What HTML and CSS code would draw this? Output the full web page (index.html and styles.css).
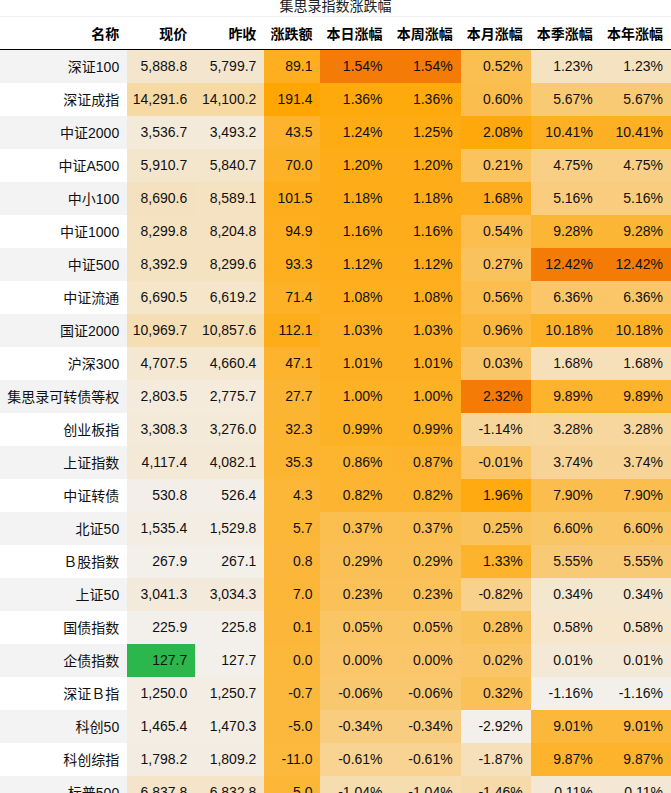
FILE: index.html
```html
<!DOCTYPE html>
<html lang="zh-CN">
<head>
<meta charset="utf-8">
<title>集思录指数涨跌幅</title>
<link rel="stylesheet" href="styles.css">
</head>
<body>
<table class="grid">
  <caption class="grid-title">集思录指数涨跌幅</caption>
  <colgroup>
    <col class="c-name"><col class="c-px"><col class="c-px2"><col class="c-chg"><col class="c-pct"><col class="c-pct"><col class="c-pct"><col class="c-pct"><col class="c-last">
  </colgroup>
  <thead>
    <tr><th>名称</th><th>现价</th><th>昨收</th><th>涨跌额</th><th>本日涨幅</th><th>本周涨幅</th><th>本月涨幅</th><th>本季涨幅</th><th>本年涨幅</th></tr>
  </thead>
  <tbody>
    <tr><th>深证100</th><td>5,888.8</td><td>5,799.7</td><td>89.1</td><td>1.54%</td><td>1.54%</td><td>0.52%</td><td>1.23%</td><td>1.23%</td></tr>
    <tr><th>深证成指</th><td>14,291.6</td><td>14,100.2</td><td>191.4</td><td>1.36%</td><td>1.36%</td><td>0.60%</td><td>5.67%</td><td>5.67%</td></tr>
    <tr><th>中证2000</th><td>3,536.7</td><td>3,493.2</td><td>43.5</td><td>1.24%</td><td>1.25%</td><td>2.08%</td><td>10.41%</td><td>10.41%</td></tr>
    <tr><th>中证A500</th><td>5,910.7</td><td>5,840.7</td><td>70.0</td><td>1.20%</td><td>1.20%</td><td>0.21%</td><td>4.75%</td><td>4.75%</td></tr>
    <tr><th>中小100</th><td>8,690.6</td><td>8,589.1</td><td>101.5</td><td>1.18%</td><td>1.18%</td><td>1.68%</td><td>5.16%</td><td>5.16%</td></tr>
    <tr><th>中证1000</th><td>8,299.8</td><td>8,204.8</td><td>94.9</td><td>1.16%</td><td>1.16%</td><td>0.54%</td><td>9.28%</td><td>9.28%</td></tr>
    <tr><th>中证500</th><td>8,392.9</td><td>8,299.6</td><td>93.3</td><td>1.12%</td><td>1.12%</td><td>0.27%</td><td>12.42%</td><td>12.42%</td></tr>
    <tr><th>中证流通</th><td>6,690.5</td><td>6,619.2</td><td>71.4</td><td>1.08%</td><td>1.08%</td><td>0.56%</td><td>6.36%</td><td>6.36%</td></tr>
    <tr><th>国证2000</th><td>10,969.7</td><td>10,857.6</td><td>112.1</td><td>1.03%</td><td>1.03%</td><td>0.96%</td><td>10.18%</td><td>10.18%</td></tr>
    <tr><th>沪深300</th><td>4,707.5</td><td>4,660.4</td><td>47.1</td><td>1.01%</td><td>1.01%</td><td>0.03%</td><td>1.68%</td><td>1.68%</td></tr>
    <tr><th>集思录可转债等权</th><td>2,803.5</td><td>2,775.7</td><td>27.7</td><td>1.00%</td><td>1.00%</td><td>2.32%</td><td>9.89%</td><td>9.89%</td></tr>
    <tr><th>创业板指</th><td>3,308.3</td><td>3,276.0</td><td>32.3</td><td>0.99%</td><td>0.99%</td><td>-1.14%</td><td>3.28%</td><td>3.28%</td></tr>
    <tr><th>上证指数</th><td>4,117.4</td><td>4,082.1</td><td>35.3</td><td>0.86%</td><td>0.87%</td><td>-0.01%</td><td>3.74%</td><td>3.74%</td></tr>
    <tr><th>中证转债</th><td>530.8</td><td>526.4</td><td>4.3</td><td>0.82%</td><td>0.82%</td><td>1.96%</td><td>7.90%</td><td>7.90%</td></tr>
    <tr><th>北证50</th><td>1,535.4</td><td>1,529.8</td><td>5.7</td><td>0.37%</td><td>0.37%</td><td>0.25%</td><td>6.60%</td><td>6.60%</td></tr>
    <tr><th>Ｂ股指数</th><td>267.9</td><td>267.1</td><td>0.8</td><td>0.29%</td><td>0.29%</td><td>1.33%</td><td>5.55%</td><td>5.55%</td></tr>
    <tr><th>上证50</th><td>3,041.3</td><td>3,034.3</td><td>7.0</td><td>0.23%</td><td>0.23%</td><td>-0.82%</td><td>0.34%</td><td>0.34%</td></tr>
    <tr><th>国债指数</th><td>225.9</td><td>225.8</td><td>0.1</td><td>0.05%</td><td>0.05%</td><td>0.28%</td><td>0.58%</td><td>0.58%</td></tr>
    <tr><th>企债指数</th><td>127.7</td><td>127.7</td><td>0.0</td><td>0.00%</td><td>0.00%</td><td>0.02%</td><td>0.01%</td><td>0.01%</td></tr>
    <tr><th>深证Ｂ指</th><td>1,250.0</td><td>1,250.7</td><td>-0.7</td><td>-0.06%</td><td>-0.06%</td><td>0.32%</td><td>-1.16%</td><td>-1.16%</td></tr>
    <tr><th>科创50</th><td>1,465.4</td><td>1,470.3</td><td>-5.0</td><td>-0.34%</td><td>-0.34%</td><td>-2.92%</td><td>9.01%</td><td>9.01%</td></tr>
    <tr><th>科创综指</th><td>1,798.2</td><td>1,809.2</td><td>-11.0</td><td>-0.61%</td><td>-0.61%</td><td>-1.87%</td><td>9.87%</td><td>9.87%</td></tr>
    <tr><th>标普500</th><td>6,837.8</td><td>6,832.8</td><td>5.0</td><td>-1.04%</td><td>-1.04%</td><td>-1.46%</td><td>0.11%</td><td>0.11%</td></tr>
  </tbody>
</table>
<script src="script.js"></script>
</body>
</html>
```

FILE: styles.css
```css
html, body {
  margin: 0;
  padding: 0;
  background: #ffffff;
  overflow: hidden;
}

body {
  font-family: "Liberation Sans", "Noto Sans CJK SC", sans-serif;
  font-size: 14px;
  color: #111111;
}

.grid {
  border-collapse: collapse;
  table-layout: fixed;
  width: 671px;
  margin-top: -4px;
}

.grid-title {
  font-size: 14px;
  line-height: 20px;
  color: #222222;
  text-align: center;
}

.c-name { width: 127px; }
.c-px { width: 68px; }
.c-px2 { width: 69px; }
.c-chg { width: 56px; }
.c-pct { width: 70px; }
.c-last { width: 70px; }

.grid th,
.grid td {
  padding: 0 8px 0 0;
  text-align: right;
  white-space: nowrap;
  vertical-align: middle;
}

.grid thead th {
  height: 32px;
  font-weight: bold;
  color: #000000;
  background: #ffffff;
  border-top: 1px solid #f0f0f0;
  border-bottom: 1px solid #000000;
}

.grid tbody th {
  font-weight: normal;
}

.grid tbody tr {
  height: 33px;
}

.grid tbody tr:nth-child(odd) {
  background: #f3f3f3;
}

.grid tbody tr:nth-child(even) {
  background: #ffffff;
}

.grid td.hl-max {
  background: #f37b06 !important;
}

.grid td.hl-min {
  background: #2bb74b !important;
}
```

FILE: script.js
```js
(function () {
  var cfg = [
    { min: 127.7, max: 47000, lowMark: true },
    { min: 127.7, max: 47000 },
    { min: -600, max: 200 },
    { min: -1.9, max: 1.54, highMark: true },
    { min: -1.9, max: 1.54, highMark: true },
    { min: -2.92, max: 2.32, highMark: true },
    { min: -1.16, max: 12.42, highMark: true },
    { min: -1.16, max: 12.42, highMark: true }
  ];
  var lo = [243, 239, 234];
  var hi = [255, 165, 0];
  var rows = document.querySelectorAll('.grid tbody tr');
  function num(cell) {
    return parseFloat(cell.textContent.replace(/,/g, '').replace('%', ''));
  }
  for (var c = 0; c < cfg.length; c++) {
    var cells = [];
    var vals = [];
    for (var r = 0; r < rows.length; r++) {
      var cell = rows[r].querySelectorAll('td')[c];
      cells.push(cell);
      vals.push(num(cell));
    }
    var vmax = Math.max.apply(null, vals);
    var vmin = Math.min.apply(null, vals);
    var k = cfg[c];
    for (var i = 0; i < cells.length; i++) {
      var v = vals[i];
      if (k.highMark && v === vmax) { cells[i].classList.add('hl-max'); continue; }
      if (k.lowMark && v === vmin) { cells[i].classList.add('hl-min'); continue; }
      var t = (v - k.min) / (k.max - k.min);
      t = Math.max(0, Math.min(1, t));
      var rgb = lo.map(function (a, j) { return Math.round(a + (hi[j] - a) * t); });
      cells[i].style.background = 'rgb(' + rgb.join(',') + ')';
    }
  }
})();
```
